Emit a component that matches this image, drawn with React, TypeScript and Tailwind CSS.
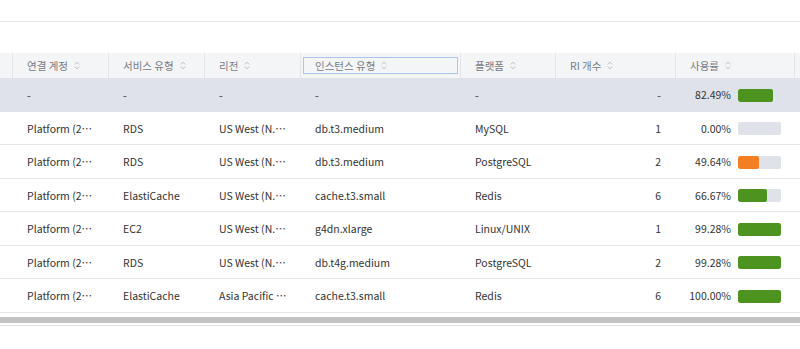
const columns = [
  { label: "" },
  { label: "연결 계정" },
  { label: "서비스 유형" },
  { label: "리전" },
  { label: "인스턴스 유형", focused: true },
  { label: "플랫폼" },
  { label: "RI 개수" },
  { label: "사용률" },
  { label: "" },
];

const rows = [
  { account: "Platform (2023-prod)", service: "RDS", region: "US West (N. California)", instance: "db.t3.medium", platform: "MySQL", count: "1", usage: 0 },
  { account: "Platform (2023-prod)", service: "RDS", region: "US West (N. California)", instance: "db.t3.medium", platform: "PostgreSQL", count: "2", usage: 49.64 },
  { account: "Platform (2023-prod)", service: "ElastiCache", region: "US West (N. California)", instance: "cache.t3.small", platform: "Redis", count: "6", usage: 66.67 },
  { account: "Platform (2023-prod)", service: "EC2", region: "US West (N. California)", instance: "g4dn.xlarge", platform: "Linux/UNIX", count: "1", usage: 99.28 },
  { account: "Platform (2023-prod)", service: "RDS", region: "US West (N. California)", instance: "db.t4g.medium", platform: "PostgreSQL", count: "2", usage: 99.28 },
  { account: "Platform (2023-prod)", service: "ElastiCache", region: "Asia Pacific (Seoul)", instance: "cache.t3.small", platform: "Redis", count: "6", usage: 100 },
];

const gridCols = "grid grid-cols-[12px_96px_96px_96px_160px_95px_120px_119px_1fr]";

const SortIcon = () => (
  <svg width="6" height="9" viewBox="0 0 6 9" className="ml-[6px] shrink-0">
    <path d="M0.8 3.4 L3 1.2 L5.2 3.4" fill="none" stroke="#b8bcc4" strokeWidth="1" />
    <path d="M0.8 5.6 L3 7.8 L5.2 5.6" fill="none" stroke="#b8bcc4" strokeWidth="1" />
  </svg>
);

const UsageBar = ({ value }: { value: number }) => {
  const color = value >= 60 ? "bg-[#4c941f]" : "bg-[#f47f22]";
  return (
    <div className="h-[13px] w-[43px] shrink-0 overflow-hidden rounded-[2px] bg-[#dfe2e8]">
      <div className={`h-full rounded-[2px] ${color}`} style={{ width: `${value}%` }} />
    </div>
  );
};

const Cell = ({ children }: { children: React.ReactNode }) => (
  <div className="truncate pl-[15px] pr-[13px]">{children}</div>
);

export default function App() {
  return (
    <div className="h-[349px] w-[800px] overflow-hidden bg-white text-[10.5px] text-[#333333] [font-family:'Noto_Sans_CJK_KR',sans-serif]">
      <div className="h-[22px] border-b border-[#e8e8e8]" />
      <div className="h-[31px]" />

      {/* header */}
      <div className={`${gridCols} h-[25px] items-stretch bg-[#f4f5f7] text-[10.5px] text-[#777b82]`}>
        {columns.map((col, i) => (
          <div key={i} className={`flex items-center ${i > 0 ? "border-l border-[#e3e5e9]" : ""}`}>
            {col.focused ? (
              <div className="mx-[2px] flex h-[17px] w-full items-center border border-[#aac4eb] pl-[11px]">
                <span>{col.label}</span>
                <SortIcon />
              </div>
            ) : col.label ? (
              <div className="flex items-center pl-[14px]">
                <span>{col.label}</span>
                <SortIcon />
              </div>
            ) : null}
          </div>
        ))}
      </div>

      {/* summary row */}
      <div className={`${gridCols} h-[33.5px] items-center bg-[#dfe2e8] pt-[1px]`}>
        <div />
        <Cell>-</Cell>
        <Cell>-</Cell>
        <Cell>-</Cell>
        <Cell>-</Cell>
        <Cell>-</Cell>
        <div className="pr-[14px] text-right">-</div>
        <div className="flex items-center justify-end gap-[7px] pr-[13px]">
          <span>82.49%</span>
          <UsageBar value={82.49} />
        </div>
        <div />
      </div>

      {rows.map((r, i) => (
        <div key={i} className={`${gridCols} h-[33.5px] items-center border-b border-[#e4e6ea] pt-[2px]`}>
          <div />
          <Cell>{r.account}</Cell>
          <Cell>{r.service}</Cell>
          <Cell>{r.region}</Cell>
          <Cell>{r.instance}</Cell>
          <Cell>{r.platform}</Cell>
          <div className="pr-[14px] text-right">{r.count}</div>
          <div className="flex items-center justify-end gap-[7px] pr-[13px]">
            <span>{r.usage.toFixed(2)}%</span>
            <UsageBar value={r.usage} />
          </div>
          <div />
        </div>
      ))}

      {/* horizontal scrollbar */}
      <div className="mt-[4px] h-[6px] bg-[#c2c2c2]" />
      <div className="mt-[2px] h-[1px] bg-[#e6e6e6]" />
    </div>
  );
}
